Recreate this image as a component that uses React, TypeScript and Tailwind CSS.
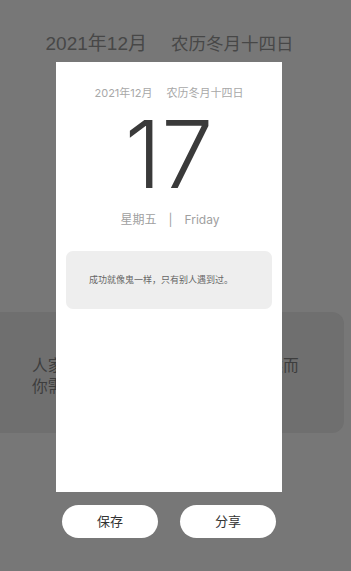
export default function App() {
  const font = { fontFamily: 'Inter, "Noto Sans CJK SC", sans-serif' };
  const headFont = { fontFamily: '"Liberation Sans", "Noto Sans CJK SC", sans-serif' };
  return (
    <div className="relative h-[571px] w-[351px] overflow-hidden bg-[#777777]" style={font}>
      {/* page behind the popup */}
      <div className="flex flex-col">
        <div className="mt-[32px] flex items-center justify-center gap-[24px] pr-[12px] leading-[24px] text-[#474747]" style={headFont}>
          <span className="text-[19px]">2021年12月</span>
          <span className="text-[17.5px]">农历冬月十四日</span>
        </div>
        <div className="ml-[-12px] mt-[256px] h-[121px] w-[356px] rounded-[12px] bg-[#6f6f6f] pl-[44px] pt-[43px] text-[15.7px] leading-[21px] text-[#3d3d3d]">
          <p>人家都说成功是一件很难的事情，然而</p>
          <p>你需要做的只是坚持下去</p>
        </div>
      </div>

      {/* popup */}
      <div className="absolute inset-0 flex flex-col">
        <div className="ml-[56px] mt-[62px] flex h-[430px] w-[226px] flex-col items-center bg-white">
          <div className="mt-[24px] flex gap-[14px] text-[11px] leading-[14px] text-[#a8a8a8]">
            <span>2021年12月</span>
            <span>农历冬月十四日</span>
          </div>
          <div className="mt-[3px] text-[93px] font-light leading-[102px] text-[#3a3a3a]">17</div>
          <div className="mt-[7px] flex gap-[12px] pl-[2px] text-[12px] leading-[16px] text-[#a0a0a0]">
            <span>星期五</span>
            <span>|</span>
            <span>Friday</span>
          </div>
          <div className="mt-[23px] flex h-[58px] w-[206px] items-center rounded-[7px] bg-[#eeeeee] pl-[23px] text-[9px] text-[#666666]">
            成功就像鬼一样，只有别人遇到过。
          </div>
        </div>
        <div className="ml-[62px] mt-[13px] flex gap-[22px]">
          <button className="h-[33px] w-[96px] rounded-full bg-white text-[13px] text-[#333333]">保存</button>
          <button className="h-[33px] w-[96px] rounded-full bg-white text-[13px] text-[#333333]">分享</button>
        </div>
      </div>
    </div>
  );
}
